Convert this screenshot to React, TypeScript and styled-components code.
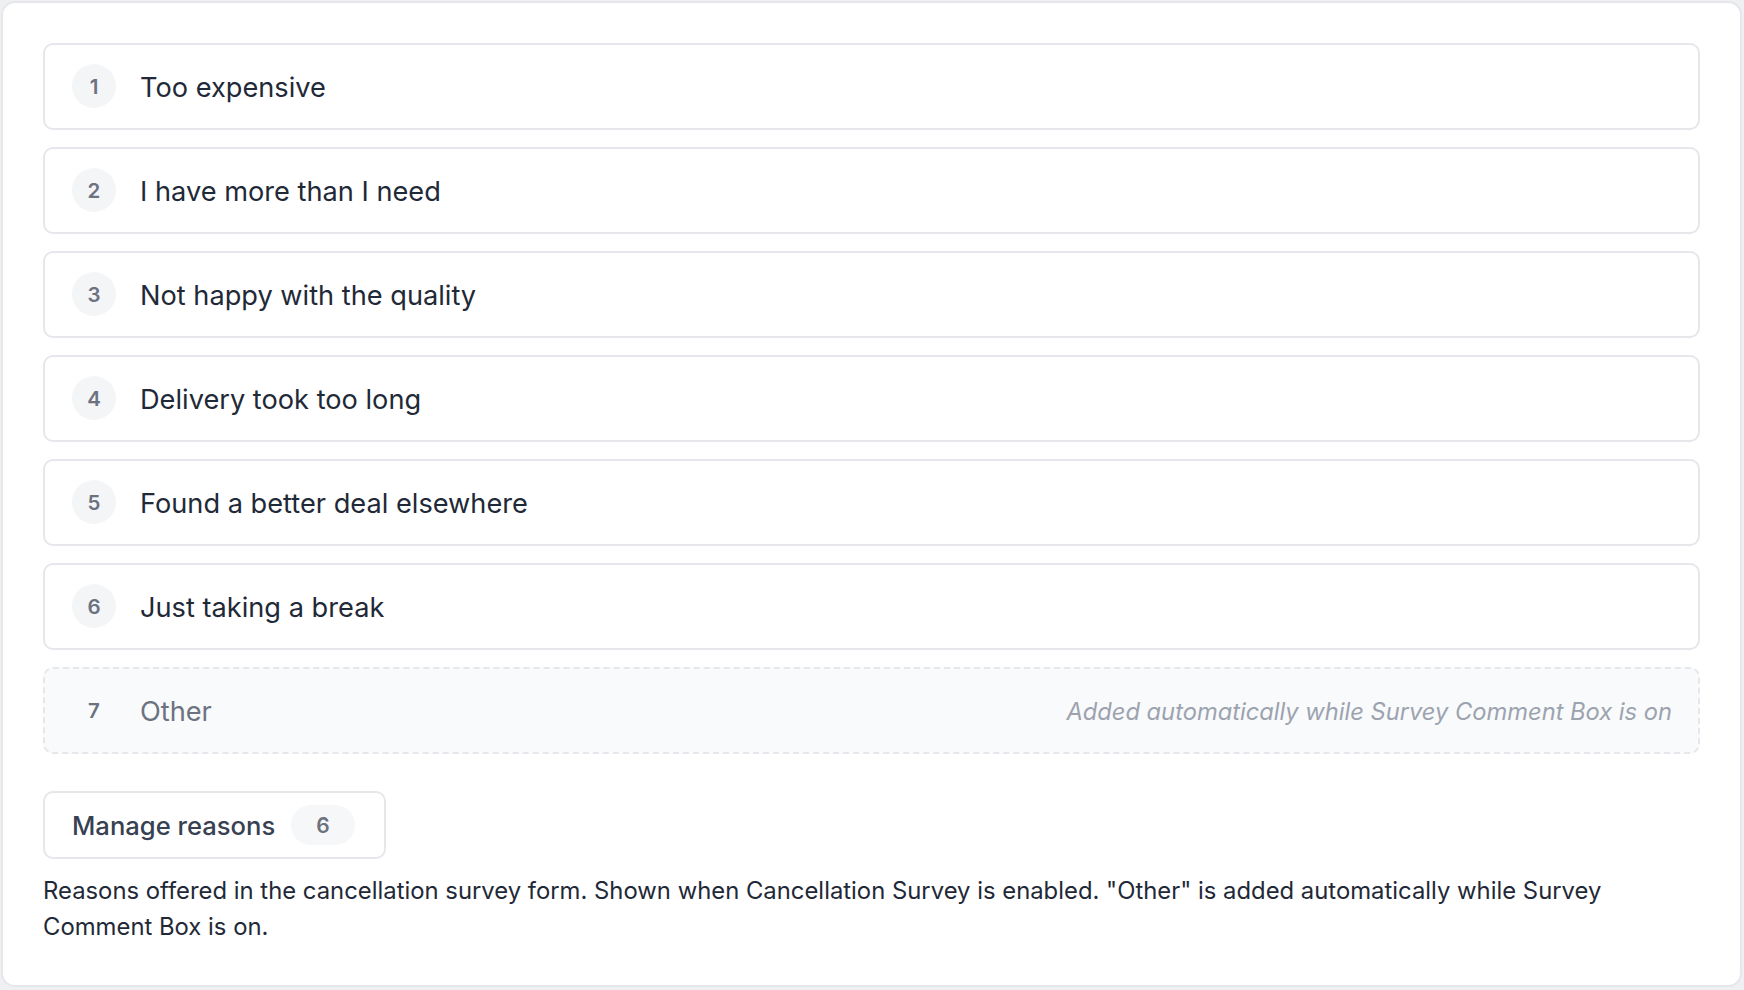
import React from "react";
import styled, { createGlobalStyle } from "styled-components";

const Global = createGlobalStyle`
  html, body {
    margin: 0;
    padding: 0;
    background: #eff0f2;
  }
  body {
    font-family: Inter, "Noto Sans", "Liberation Sans", sans-serif;
    -webkit-font-smoothing: antialiased;
  }
`;

const Card = styled.div`
  margin: 1px 2px 0 1px;
  box-sizing: border-box;
  height: 986px;
  background: #ffffff;
  border: 2px solid #e6e7eb;
  border-radius: 14px;
  padding: 40px 40px 40px 40px;
  display: flex;
  flex-direction: column;
`;

const List = styled.div`
  display: flex;
  flex-direction: column;
  gap: 17px;
`;

const Row = styled.div<{ $auto?: boolean }>`
  box-sizing: border-box;
  height: 87px;
  display: flex;
  align-items: center;
  gap: 24px;
  padding: 1px 26px 0 27px;
  border-radius: 10px;
  border: 2px ${(p) => (p.$auto ? "dashed" : "solid")} #e6e7eb;
  background: ${(p) => (p.$auto ? "#f9fafb" : "#ffffff")};
`;

const Num = styled.div<{ $plain?: boolean }>`
  width: 44px;
  height: 44px;
  flex: 0 0 44px;
  border-radius: 50%;
  background: ${(p) => (p.$plain ? "transparent" : "#f4f5f7")};
  color: #6b7280;
  font-size: 20.5px;
  font-weight: 600;
  display: flex;
  align-items: center;
  justify-content: center;
  margin-top: -2px;
`;

const Label = styled.div<{ $muted?: boolean }>`
  font-size: 27.2px;
  color: ${(p) => (p.$muted ? "#6b7280" : "#1f2937")};
  flex: 1;
`;

const Note = styled.div`
  font-size: 23.7px;
  font-style: italic;
  color: #9ca3af;
`;

const Button = styled.button`
  align-self: flex-start;
  margin-top: 37px;
  box-sizing: border-box;
  height: 70px;
  width: 343px;
  display: flex;
  align-items: center;
  justify-content: space-between;
  padding: 0 29px 0 27px;
  background: #ffffff;
  border: 2px solid #e6e7eb;
  border-radius: 10px;
  font-family: inherit;
  font-size: 25.6px;
  font-weight: 500;
  color: #374151;
  cursor: pointer;
`;

const Badge = styled.span`
  width: 64px;
  height: 40px;
  border-radius: 20px;
  background: #f6f7f9;
  color: #6b7280;
  font-size: 21px;
  font-weight: 600;
  display: flex;
  align-items: center;
  justify-content: center;
`;

const Help = styled.p`
  margin: 14px 0 0 0;
  max-width: 1600px;
  font-size: 23.85px;
  line-height: 36px;
  color: #1f2937;
`;

const reasons = [
  "Too expensive",
  "I have more than I need",
  "Not happy with the quality",
  "Delivery took too long",
  "Found a better deal elsewhere",
  "Just taking a break",
];

export default function App() {
  return (
    <>
      <Global />
      <Card>
        <List>
          {reasons.map((r, i) => (
            <Row key={r}>
              <Num>{i + 1}</Num>
              <Label>{r}</Label>
            </Row>
          ))}
          <Row $auto>
            <Num $plain>7</Num>
            <Label $muted>Other</Label>
            <Note>Added automatically while Survey Comment Box is on</Note>
          </Row>
        </List>
        <Button>
          <span>Manage reasons</span>
          <Badge>6</Badge>
        </Button>
        <Help>
          Reasons offered in the cancellation survey form. Shown when Cancellation Survey is enabled.
          "Other" is added automatically while Survey Comment Box is on.
        </Help>
      </Card>
    </>
  );
}
